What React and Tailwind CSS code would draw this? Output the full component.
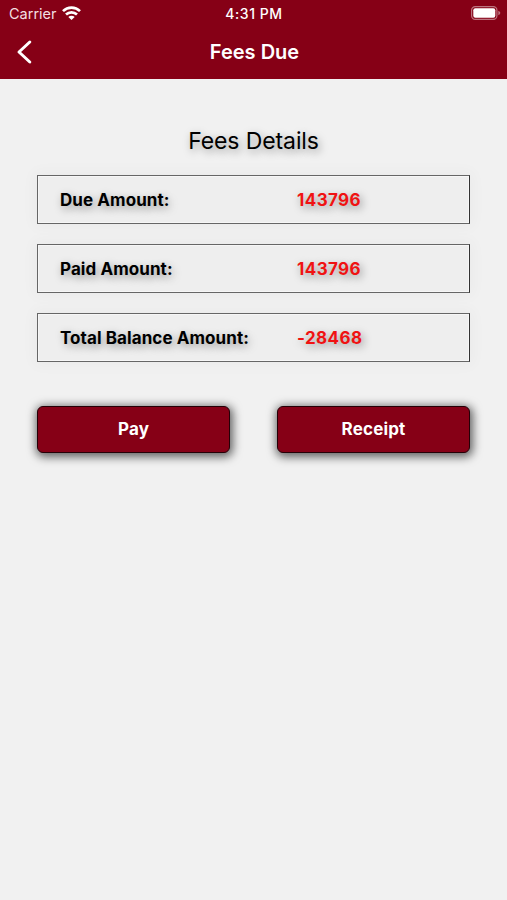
const rows = [
  { label: 'Due Amount:', value: '143796' },
  { label: 'Paid Amount:', value: '143796' },
  { label: 'Total Balance Amount:', value: '-28468' },
];

function WifiIcon() {
  return (
    <svg className="ml-[5px] h-[14px] w-[19px] -translate-y-px" viewBox="0 0 19 14" fill="none" stroke="#fff" strokeWidth="2.7">
      <path d="M1 5.1C5.8 .5 13.2 .5 18 5.1" />
      <path d="M4 8.5C7.1 5.6 11.9 5.6 15 8.5" />
      <path d="M6.3 11C8 9.4 11 9.4 12.7 11L9.5 14Z" fill="#fff" stroke="none" />
    </svg>
  );
}

function BatteryIcon() {
  return (
    <svg className="h-[14px] w-[30px] -translate-y-px" viewBox="0 0 30 14">
      <rect x=".6" y=".6" width="25.3" height="12.8" rx="3.6" fill="none" stroke="#fff" strokeOpacity=".45" strokeWidth="1.2" />
      <rect x="2.3" y="2.3" width="22" height="9.4" rx="2" fill="#fff" />
      <path d="M27.3 4.8C29.9 5.8 29.9 8.2 27.3 9.2Z" fill="#fff" fillOpacity=".45" />
    </svg>
  );
}

function ActionButton({ children }) {
  return (
    <button className="h-[47px] w-[193px] rounded-[6px] border border-[#250007] bg-[#860016] pt-px text-[17px] font-bold tracking-[0.15px] text-white shadow-[1px_2px_10px_2px_rgba(0,0,0,0.6)]">
      {children}
    </button>
  );
}

export default function App() {
  return (
    <div className="flex h-[900px] w-[507px] flex-col bg-[#f1f1f1] font-['Inter','Liberation_Sans',sans-serif] text-black">
      <header className="flex h-[79px] flex-col bg-[#860016] text-white">
        <div className="grid h-[27px] grid-cols-3 items-center pr-[6px] pl-[9px]">
          <div className="flex items-center text-[14.5px] text-[#f3dfe1]">
            <span>Carrier</span>
            <WifiIcon />
          </div>
          <span className="-ml-[2px] text-center text-[14px] font-medium tracking-[0.55px]">4:31 PM</span>
          <div className="flex justify-end"><BatteryIcon /></div>
        </div>
        <div className="grid h-[50px] grid-cols-[40px_1fr_40px] items-center">
          <svg className="ml-[16px] h-[26px] w-[17px]" viewBox="0 0 17 26" fill="none" stroke="#fff" strokeWidth="3" strokeLinecap="round" strokeLinejoin="round">
            <path d="M13.8 3L3 13L13.8 23" />
          </svg>
          <h1 className="pl-[2px] text-center text-[20px] font-semibold">Fees Due</h1>
        </div>
      </header>
      <main className="flex flex-col pt-[44px] pr-[37px] pl-[37px]">
        <h2 className="text-center text-[23px] leading-9 tracking-[-0.1px] [text-shadow:2px_3px_8px_rgba(0,0,0,0.4)]">Fees Details</h2>
        <div className="mt-[16px] flex flex-col gap-[20px]">
          {rows.map((row) => (
            <div key={row.label} className="flex h-[49px] items-center border border-[#666] border-r-[#333] bg-[#eeeeee] pt-[2px] pl-[22px] text-[17px] font-bold shadow-[0_0_14px_3px_rgba(0,0,0,0.03),inset_0_0_0_1px_#f6f6f6] [text-shadow:2px_3px_8px_rgba(0,0,0,0.4)]">
              <span className="w-[237px] tracking-[0.08px]">{row.label}</span>
              <span className="tracking-[0.4px] text-[#f01212]">{row.value}</span>
            </div>
          ))}
        </div>
        <div className="mt-[44px] flex justify-between">
          <ActionButton>Pay</ActionButton>
          <ActionButton>Receipt</ActionButton>
        </div>
      </main>
    </div>
  );
}
